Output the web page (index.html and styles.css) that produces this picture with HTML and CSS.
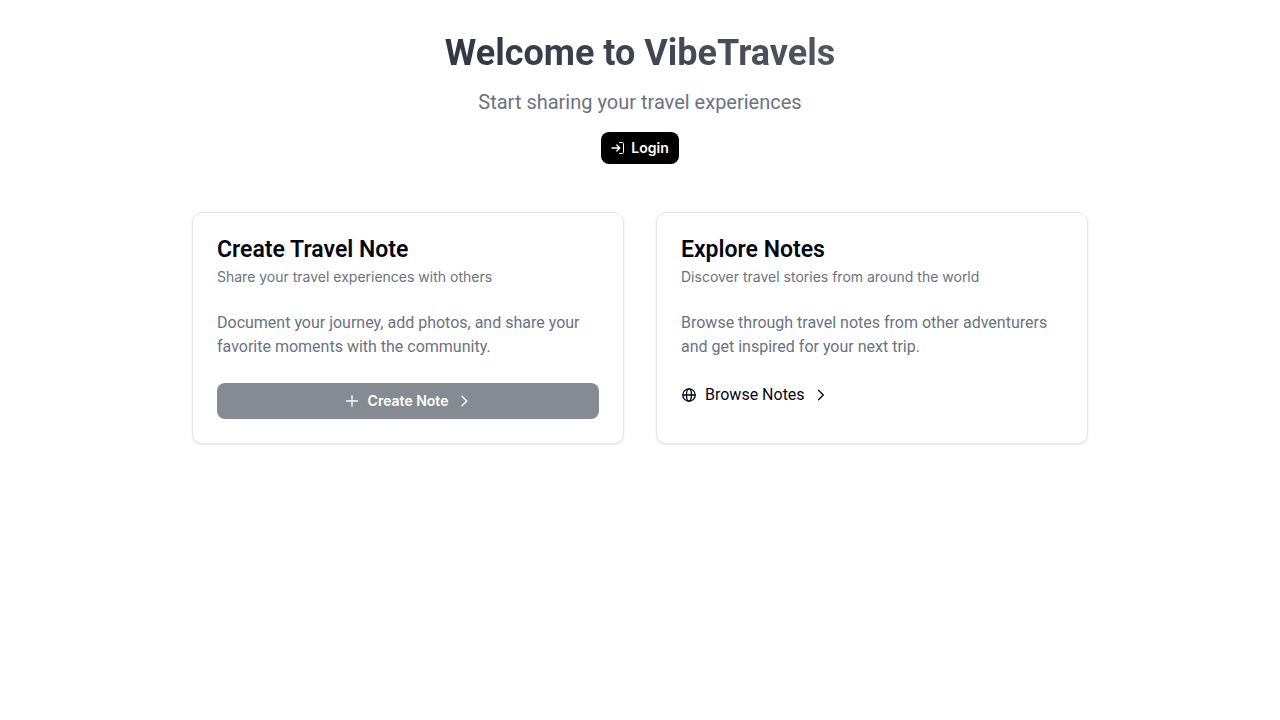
FILE: index.html
```html
<!DOCTYPE html>
<html lang="en">
<head>
<meta charset="utf-8">
<meta name="viewport" content="width=device-width, initial-scale=1">
<title>VibeTravels</title>
<link rel="stylesheet" href="styles.css">
</head>
<body>
<main class="page">
  <header class="hero">
    <h1 class="hero-title">Welcome to VibeTravels</h1>
    <p class="hero-subtitle">Start sharing your travel experiences</p>
    <button class="button login" type="button">
      <svg class="icon" viewBox="0 0 14 14" aria-hidden="true"><path d="M1 7h7.5M5.8 4l3 3-3 3"/><path d="M8.5 1.5h3a1 1 0 0 1 1 1v9a1 1 0 0 1-1 1h-3" stroke-width="1"/></svg>
      Login
    </button>
  </header>
  <div class="cards">
    <section class="card">
      <h2 class="card-title">Create Travel Note</h2>
      <p class="card-description">Share your travel experiences with others</p>
      <p class="card-text">Document your journey, add photos, and share your favorite moments with the community.</p>
      <button class="button create" type="button" disabled>
        <svg class="icon" viewBox="0 0 16 16" aria-hidden="true"><path d="M2.6 8h10.8M8 2.6v10.8"/></svg>
        Create Note
        <svg class="icon" viewBox="0 0 16 16" aria-hidden="true"><path d="m6 3.2 4.8 4.8L6 12.8"/></svg>
      </button>
    </section>
    <section class="card">
      <h2 class="card-title">Explore Notes</h2>
      <p class="card-description">Discover travel stories from around the world</p>
      <p class="card-text">Browse through travel notes from other adventurers and get inspired for your next trip.</p>
      <a class="browse" href="#notes">
        <svg class="icon" viewBox="0 0 16 16" aria-hidden="true"><circle cx="8" cy="8" r="6.2"/><ellipse cx="8" cy="8" rx="2.5" ry="6.2"/><path d="M2 8h12"/></svg>
        Browse Notes
        <svg class="icon" viewBox="0 0 16 16" aria-hidden="true"><path d="M5.5 3.2 10.3 8l-4.8 4.8"/></svg>
      </a>
    </section>
  </div>
</main>
</body>
</html>
```
FILE: styles.css
```css
* {
  box-sizing: border-box;
}

body {
  margin: 0;
  background: #fff;
  color: #030712;
  font-family: Roboto, "Liberation Sans", sans-serif;
  font-size: 16px;
  line-height: 24px;
}

h1, h2, p {
  margin: 0;
}

.page {
  max-width: 960px;
  margin: 0 auto;
  padding: 32px;
}

.hero {
  display: flex;
  flex-direction: column;
  align-items: center;
  margin-bottom: 48px;
  text-align: center;
}

.hero-title {
  margin-bottom: 14px;
  background: linear-gradient(to right, #303643, #50555f);
  background-clip: text;
  color: transparent;
  font-size: 36px;
  font-weight: 700;
  line-height: 42px;
}

.hero-subtitle {
  margin-bottom: 16px;
  color: #6b7280;
  font-size: 20px;
  line-height: 28px;
}

.button {
  display: flex;
  align-items: center;
  justify-content: center;
  gap: 8px;
  border: 0;
  border-radius: 8px;
  color: #fff;
  font-family: Inter, "Liberation Sans", sans-serif;
  font-size: 14px;
  font-weight: 600;
  line-height: 20px;
}

.login {
  gap: 6px;
  padding: 6px 10px;
  background: #000;
}

.login .icon {
  width: 14px;
  height: 14px;
}

.icon {
  flex: none;
  width: 16px;
  height: 16px;
  fill: none;
  stroke: currentColor;
  stroke-width: 1.3;
  stroke-linecap: round;
  stroke-linejoin: round;
}

.cards {
  display: grid;
  grid-template-columns: repeat(auto-fit, minmax(320px, 1fr));
  gap: 32px;
}

.card {
  padding: 24px;
  border: 1px solid #e5e7eb;
  border-radius: 10px;
  background: #fff;
  box-shadow: 0 1px 2px rgb(0 0 0 / 10%);
}

.card-title {
  margin-bottom: 4px;
  font-size: 23px;
  font-weight: 600;
  line-height: 26px;
}

.card-description {
  margin-bottom: 24px;
  color: #6b7280;
  font-family: Inter, "Liberation Sans", sans-serif;
  font-size: 14px;
  line-height: 20px;
}

.card-text {
  margin-bottom: 24px;
  color: #6b7280;
}

.create {
  width: 100%;
  padding: 8px 16px;
  background: #868a93;
}

.browse {
  display: flex;
  width: fit-content;
  align-items: center;
  gap: 8px;
  color: #030712;
  text-decoration: none;
}
```
